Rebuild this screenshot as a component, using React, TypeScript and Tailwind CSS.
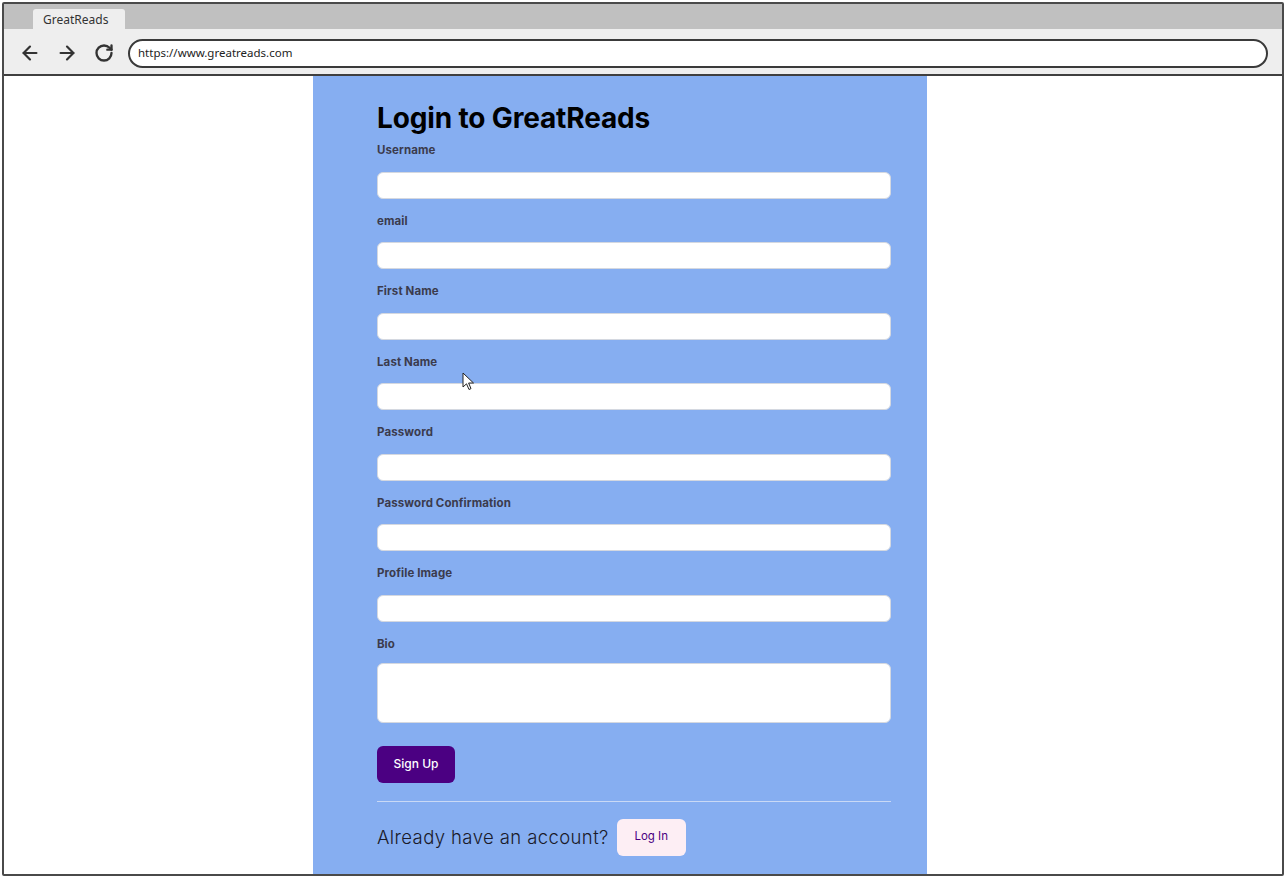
import { ArrowLeft, ArrowRight, RotateCw } from 'lucide-react'

const fields = ['Username', 'email', 'First Name', 'Last Name', 'Password', 'Password Confirmation', 'Profile Image']

function Field({ label }: { label: string }) {
  return (
    <div className="mb-[14px]">
      <div className="h-[16px] mb-[13.5px] text-[11.5px] leading-[16px] font-bold text-[#3b3b4d] tracking-[0.1px]">{label}</div>
      <div className="h-[27px] w-full rounded-[6px] bg-white border border-[#d4d8e0]" />
    </div>
  )
}

export default function App() {
  return (
    <div className="w-[1286px] h-[878px] bg-white p-[2px] relative overflow-hidden font-['Inter',sans-serif]">
      <div className="h-full flex flex-col border-2 border-[#4a4a4a] rounded-[2px]">
        <div className="h-[25px] bg-[#c0c0c0] flex items-end pl-[29px] shrink-0">
          <div className="h-[20px] w-[92px] bg-[#eeeeee] rounded-t-[3px] flex items-center pl-[10px] pt-[2px] text-[12px] text-[#333] font-['Noto_Sans',sans-serif]">
            GreatReads
          </div>
        </div>
        <div className="h-[47px] bg-[#eeeeee] border-b-2 border-[#3f3f3f] flex items-center pl-[15px] pr-[14px] pt-[3px] shrink-0">
          <ArrowLeft size={22} strokeWidth={2.4} className="text-[#333]" />
          <ArrowRight size={22} strokeWidth={2.4} className="text-[#333] ml-[15px]" />
          <RotateCw size={20} strokeWidth={2.8} className="text-[#333] ml-[16px]" />
          <div className="ml-[14px] flex-1 h-[29px] rounded-full border-2 border-[#3a3a3a] bg-white flex items-center pl-[8px] text-[11.5px] text-[#222] font-['Noto_Sans',sans-serif]">
            https://www.greatreads.com
          </div>
        </div>
        <div className="flex-1 flex">
          <div className="ml-[309px] w-[614px] bg-[#86aef1] pt-[25px] pl-[64px] pr-[36px] pb-0">
            <h1 className="text-[28px] leading-[34px] font-bold text-black tracking-[-0.15px] mb-[7px]">Login to GreatReads</h1>
            {fields.map((f) => (
              <Field key={f} label={f} />
            ))}
            <div className="h-[16px] mb-[11px] text-[11.5px] leading-[16px] font-bold text-[#3b3b4d]">Bio</div>
            <div className="h-[60px] w-full rounded-[6px] bg-white border border-[#d4d8e0]" />
            <button className="mt-[23px] h-[37px] w-[78px] rounded-[6px] bg-[#4b0082] text-white text-[12px] font-medium">
              Sign Up
            </button>
            <div className="mt-[18px] h-px bg-[#c9d9f5]" />
            <div className="mt-[17px] flex items-center">
              <span className="text-[18.5px] text-[#1a1a2a] font-light leading-[24px] tracking-[0.4px]">Already have an account?</span>
              <button className="ml-[8px] h-[37px] w-[69px] rounded-[6px] bg-[#fdeef4] text-[#4b0082] text-[11.5px]">
                Log In
              </button>
            </div>
          </div>
        </div>
      </div>
      <svg className="absolute left-[462px] top-[372px]" width="13" height="19" viewBox="0 0 13 19">
        <path d="M1 1 L1 15 L4.5 11.8 L7 17.5 L9 16.6 L6.6 11 L11.5 11 Z" fill="white" stroke="#222" strokeWidth="1" strokeLinejoin="round" />
      </svg>
    </div>
  )
}
